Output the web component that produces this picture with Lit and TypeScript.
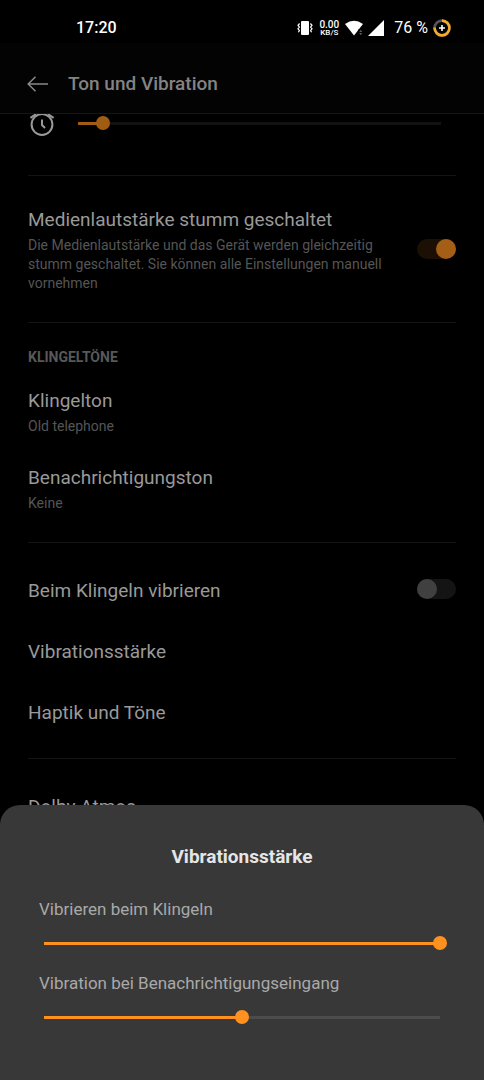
import { LitElement, html, css, nothing } from "lit";
import { customElement, property, state } from "lit/decorators.js";

@customElement("level-slider")
class LevelSlider extends LitElement {
  @property({ type: Number }) value = 0;
  @property() label = "";
  @property({ type: Boolean, attribute: "hide-label" }) hideLabel = false;

  static styles = css`
    :host {
      --fill: #ff9120;
      --line: #4c4c4c;
      display: flex;
      flex-direction: column;
      gap: 16px;
    }
    .label {
      margin-left: 2px;
      font-size: 17px;
      line-height: 22px;
      color: #a9a9a9;
    }
    .range {
      appearance: none;
      display: block;
      width: 100%;
      height: 14px;
      margin: 0;
      background: none;
      cursor: pointer;
    }
    .range::-webkit-slider-runnable-track {
      height: 14px;
      padding: 0;
      background: linear-gradient(to right, var(--fill) var(--level), var(--line) var(--level))
        center / calc(100% - 14px) 3px no-repeat;
    }
    .range::-webkit-slider-thumb {
      appearance: none;
      width: 14px;
      height: 14px;
      border-radius: 50%;
      background: var(--fill);
    }
  `;

  private onInput(e: Event) {
    this.value = Number((e.target as HTMLInputElement).value);
  }

  render() {
    return html`
      ${this.hideLabel ? nothing : html`<label class="label" for="range">${this.label}</label>`}
      <input
        id="range"
        class="range"
        type="range"
        min="0"
        max="100"
        aria-label=${this.hideLabel ? this.label : nothing}
        style="--level: ${this.value}%"
        .value=${String(this.value)}
        @input=${this.onInput}
      />
    `;
  }
}

@customElement("app-root")
class AppRoot extends LitElement {
  @state() private muteMedia = true;
  @state() private vibrateOnRing = false;

  static styles = css`
    :host {
      display: flex;
      flex-direction: column;
      position: relative;
      height: 100vh;
      overflow: hidden;
      background: #000;
      font-family: Roboto, "Noto Sans", sans-serif;
    }
    .status {
      display: flex;
      align-items: center;
      justify-content: space-between;
      box-sizing: border-box;
      height: 43px;
      padding: 13px 33px 0 76px;
      color: #fff;
      font-size: 16px;
      line-height: 20px;
      font-weight: 500;
    }
    .indicators {
      display: flex;
      align-items: center;
    }
    .indicators svg {
      display: block;
    }
    .speed {
      display: flex;
      flex-direction: column;
      width: 22px;
      margin: 0 5px;
      text-align: center;
      font-size: 10px;
      line-height: 9px;
    }
    .unit {
      font-size: 8px;
      line-height: 7px;
    }
    .signal {
      margin-left: 5px;
    }
    .percent {
      margin: 0 5px 0 10px;
      font-weight: 400;
    }
    .bar {
      display: flex;
      align-items: center;
      gap: 20px;
      box-sizing: border-box;
      height: 71px;
      padding: 12px 27px 0;
      background: #030303;
      border-bottom: 1px solid #151515;
    }
    .back {
      display: block;
      padding: 0;
      border: 0;
      background: none;
      color: #8a8a8a;
      cursor: pointer;
    }
    .back svg {
      display: block;
    }
    .heading {
      margin: 0;
      font-size: 19px;
      line-height: 24px;
      font-weight: 500;
      color: #838383;
    }
    .content {
      flex: 1;
      min-height: 0;
      overflow: hidden;
      padding: 0 28px;
    }
    .section {
      display: flex;
      flex-direction: column;
      border-bottom: 1px solid #141414;
    }
    .volume {
      flex-direction: row;
      align-items: center;
      gap: 15px;
      height: 18px;
      padding-bottom: 43px;
    }
    .alarm {
      flex: none;
      color: #999;
    }
    .volume-slider {
      --fill: #a15c14;
      --line: #121212;
      flex: 1;
      margin-right: 8px;
    }
    .media {
      padding: 32px 0 29px;
    }
    .tones {
      gap: 30px;
      padding: 24px 0 29px;
    }
    .vibration {
      gap: 37px;
      padding: 36px 0 33px;
    }
    .more {
      padding: 36px 0;
      border: 0;
    }
    .group {
      margin: 0 0 -8px;
      font-size: 14px;
      line-height: 20px;
      font-weight: 700;
      color: #585858;
    }
    .row {
      display: flex;
      align-items: center;
      justify-content: space-between;
      gap: 32px;
    }
    .item {
      display: flex;
      flex-direction: column;
      gap: 4px;
      padding: 0;
      border: 0;
      background: none;
      font-family: inherit;
      text-align: left;
      cursor: pointer;
    }
    .title {
      font-size: 19px;
      line-height: 24px;
      color: #999;
    }
    .detail {
      font-size: 14px;
      line-height: 19px;
      color: #555;
    }
    .switch {
      appearance: none;
      flex: none;
      display: flex;
      width: 39px;
      height: 20px;
      margin: 0 0 4px;
      border-radius: 10px;
      background: #141414;
      cursor: pointer;
    }
    .switch::before {
      content: "";
      width: 20px;
      height: 20px;
      border-radius: 50%;
      background: #404040;
    }
    .switch:checked {
      justify-content: flex-end;
      background: #1b1003;
    }
    .switch:checked::before {
      background: #a55e15;
    }
    .sheet {
      position: absolute;
      left: 0;
      right: 0;
      bottom: 0;
      display: flex;
      flex-direction: column;
      gap: 22px;
      padding: 40px 37px 56px;
      border-radius: 20px 20px 0 0;
      background: #383838;
    }
    .sheet-title {
      margin: 0 0 7px;
      font-size: 19px;
      line-height: 24px;
      font-weight: 700;
      text-align: center;
      color: #e6e6e6;
    }
  `;

  private item(title: string, detail?: string) {
    return html`
      <button class="item" type="button">
        <span class="title">${title}</span>
        ${detail ? html`<span class="detail">${detail}</span>` : nothing}
      </button>
    `;
  }

  render() {
    return html`
      <div class="status">
        <span>17:20</span>
        <div class="indicators">
          <svg width="16" height="16" viewBox="0 0 16 16" fill="#fff" aria-hidden="true">
            <rect x="4" y="1" width="8" height="14" rx="1" />
            <path d="M2.6 3.5 1 5.3 2.4 7 1 8.8 2.4 10.5 1.4 12.3M13.4 3.5 15 5.3 13.6 7 15 8.8 13.6 10.5 14.6 12.3" fill="none" stroke="#fff" stroke-width="1.2" />
          </svg>
          <span class="speed"><span>0.00</span><span class="unit">KB/S</span></span>
          <svg width="18" height="16" viewBox="0 0 18 16" aria-hidden="true">
            <path d="M0 4Q9-2.6 18 4L9 15.6Z" fill="#fff" />
            <path d="M13 16V9.5H18V16Z" fill="#000" />
            <path d="m14.3 11.8 1.5-1.8 1.5 1.8zm0 1.4 1.5 1.8 1.5-1.8z" fill="#777" />
          </svg>
          <svg class="signal" width="16" height="16" viewBox="0 0 16 16" aria-hidden="true">
            <path d="M0 16 16 0V16Z" fill="#fff" />
          </svg>
          <span class="percent">76 %</span>
          <svg width="18" height="18" viewBox="0 0 18 18" fill="none" aria-hidden="true">
            <circle cx="9" cy="9" r="7.4" stroke="#555" stroke-width="2.6" />
            <circle cx="9" cy="9" r="7.4" stroke="#f5ab29" stroke-width="2.6" pathLength="100" stroke-dasharray="76 100" transform="rotate(-90 9 9)" />
            <path d="M9 6v6M6 9h6" stroke="#fff" stroke-width="1.6" />
          </svg>
        </div>
      </div>

      <header class="bar">
        <button class="back" type="button" aria-label="Zurück">
          <svg width="21" height="16" viewBox="0 0 21 16" fill="none" stroke="currentColor" stroke-width="1.5">
            <path d="M8.5 .8 1.2 8l7.3 7.2M1.2 8H21" />
          </svg>
        </button>
        <h1 class="heading">Ton und Vibration</h1>
      </header>

      <main class="content">
        <section class="section volume">
          <svg class="alarm" width="28" height="28" viewBox="0 0 28 28" fill="none" stroke="currentColor" stroke-width="2" aria-hidden="true">
            <circle cx="14" cy="15.5" r="10.4" />
            <path d="M14 10.5v5.5l3 3M2.4 8.8 8 5.2M25.6 8.8 20 5.2" />
          </svg>
          <level-slider class="volume-slider" label="Weckerlautstärke" hide-label .value=${7}></level-slider>
        </section>

        <section class="section media">
          <div class="row">
            <label class="item" for="mute">
              <span class="title">Medienlautstärke stumm geschaltet</span>
              <span class="detail">Die Medienlautstärke und das Gerät werden gleichzeitig stumm geschaltet. Sie können alle Einstellungen manuell vornehmen</span>
            </label>
            <input id="mute" class="switch" type="checkbox" role="switch" .checked=${this.muteMedia}
              @change=${() => (this.muteMedia = !this.muteMedia)} />
          </div>
        </section>

        <section class="section tones">
          <h2 class="group">KLINGELTÖNE</h2>
          ${this.item("Klingelton", "Old telephone")}
          ${this.item("Benachrichtigungston", "Keine")}
        </section>

        <section class="section vibration">
          <div class="row">
            <label class="item" for="ring"><span class="title">Beim Klingeln vibrieren</span></label>
            <input id="ring" class="switch" type="checkbox" role="switch" .checked=${this.vibrateOnRing}
              @change=${() => (this.vibrateOnRing = !this.vibrateOnRing)} />
          </div>
          ${this.item("Vibrationsstärke")}
          ${this.item("Haptik und Töne")}
        </section>

        <section class="section more">${this.item("Dolby Atmos")}</section>
      </main>

      <section class="sheet" role="dialog" aria-labelledby="sheet-title">
        <h2 class="sheet-title" id="sheet-title">Vibrationsstärke</h2>
        <level-slider label="Vibrieren beim Klingeln" .value=${100}></level-slider>
        <level-slider label="Vibration bei Benachrichtigungseingang" .value=${50}></level-slider>
      </section>
    `;
  }
}
